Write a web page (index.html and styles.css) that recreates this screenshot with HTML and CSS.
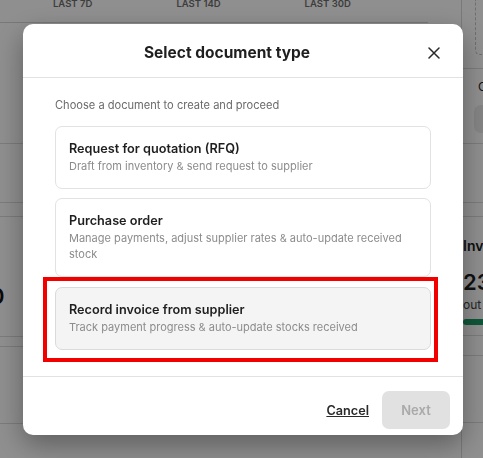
FILE: index.html
```html
<!DOCTYPE html>
<html lang="en">
<head>
  <meta charset="UTF-8">
  <title>Select document type</title>
  <link rel="stylesheet" href="styles.css">
</head>
<body>
  <div class="page">
    <div class="main">
      <div class="ranges">
        <span>Last 7D</span>
        <span>Last 14D</span>
        <span>Last 30D</span>
      </div>
      <div class="row h120"></div>
      <div class="row h58"></div>
      <div class="row h13"></div>
      <div class="row h119"><span class="big-num">0</span></div>
      <div class="row h9"></div>
      <div class="row h76"></div>
    </div>
    <aside class="side">
      <div class="side-top">
        <div class="drop-box"></div>
      </div>
      <div class="side-filter">
        <div class="side-label">C</div>
        <div class="side-select"></div>
      </div>
      <div class="row h58"></div>
      <div class="row h13"></div>
      <div class="side-stat">
        <div class="stat-title">Inventory</div>
        <div class="stat-num">23</div>
        <div class="stat-sub">out of</div>
        <div class="stat-bar"></div>
      </div>
      <div class="row h19"></div>
      <div class="row h66"></div>
    </aside>
  </div>

  <div class="backdrop">
    <div class="modal">
      <header class="modal-head">
        <h2>Select document type</h2>
        <button class="close" type="button" aria-label="Close">
          <svg width="12" height="12" viewBox="0 0 12 12">
            <path d="M1 1L11 11M11 1L1 11" stroke="#2a2a2a" stroke-width="1.5" stroke-linecap="round"/>
          </svg>
        </button>
      </header>
      <div class="modal-body">
        <p class="hint">Choose a document to create and proceed</p>
        <div class="options">
          <div class="option">
            <div class="option-title">Request for quotation (RFQ)</div>
            <div class="option-desc">Draft from inventory &amp; send request to supplier</div>
          </div>
          <div class="option">
            <div class="option-title">Purchase order</div>
            <div class="option-desc">Manage payments, adjust supplier rates &amp; auto-update received stock</div>
          </div>
          <div class="option selected">
            <div class="option-title">Record invoice from supplier</div>
            <div class="option-desc">Track payment progress &amp; auto-update stocks received</div>
          </div>
        </div>
      </div>
      <footer class="modal-foot">
        <a class="cancel" href="#">Cancel</a>
        <button class="next" type="button" disabled>Next</button>
      </footer>
    </div>
  </div>
</body>
</html>
```

FILE: styles.css
```css
html, body {
  height: 458px;
  overflow: hidden;
}
body {
  font-family: 'Inter', 'Noto Sans', sans-serif;
  margin: 0;
  padding: 0;
  background-color: #fff;
}

/* dashboard behind the dialog */
.page {
  display: flex;
  height: 458px;
}
.main {
  width: 461px;
  border-right: 1px solid #d8d8d8;
  flex-shrink: 0;
}
.ranges {
  display: flex;
  gap: 84px;
  height: 22px;
  margin-right: 33px;
  padding-left: 53px;
  border-bottom: 1px solid #d6d6d6;
}
.ranges span {
  margin-top: -2px;
  font-size: 9.5px;
  line-height: 12px;
  font-weight: 600;
  text-transform: uppercase;
  color: #6e6e6e;
}
.row {
  border-bottom: 1px solid #dcdcdc;
}
.h120 { height: 120px; }
.h58 { height: 58px; }
.h13 { height: 13px; }
.h119 { height: 119px; }
.h9 { height: 9px; }
.h76 { height: 76px; }
.h19 { height: 19px; }
.h66 { height: 66px; }
.big-num {
  display: block;
  padding: 66px 0 0;
  margin-left: -10px;
  font-size: 22px;
  font-weight: 600;
  color: #111;
}

.side {
  flex: 1;
  overflow: hidden;
  white-space: nowrap;
}
.side-top {
  height: 68px;
  padding-left: 13px;
  border-bottom: 1px solid #dcdcdc;
}
.drop-box {
  height: 54px;
  border: 1px dashed #c4c4c4;
  border-top: none;
  border-right: none;
  border-radius: 0 0 0 5px;
}
.side-filter {
  height: 74px;
  padding-left: 16px;
  border-bottom: 1px solid #dcdcdc;
}
.side-label {
  padding-top: 10px;
  font-size: 12px;
  line-height: 16px;
  color: #222;
}
.side-select {
  height: 28px;
  margin: 10px 0 0 -4px;
  background-color: #ececec;
  border-radius: 7px 0 0 7px;
}
.side-stat {
  height: 118px;
  padding-left: 1px;
  border-bottom: 1px solid #dcdcdc;
}
.stat-title {
  padding-top: 20px;
  font-size: 14px;
  line-height: 18px;
  font-weight: 600;
  color: #1c1c1c;
}
.stat-num {
  margin-top: 14px;
  font-size: 22px;
  line-height: 26px;
  font-weight: 600;
  color: #1c1c1c;
}
.stat-sub {
  margin-top: 3px;
  font-size: 12px;
  line-height: 14px;
  color: #444;
}
.stat-bar {
  height: 6px;
  margin-top: 7px;
  background-color: #1b9a66;
  border-radius: 3px 0 0 3px;
}

/* dialog */
.backdrop {
  position: fixed;
  inset: 0;
  background-color: rgba(0, 0, 0, 0.44);
}
.modal {
  width: 440px;
  margin: 24px 0 0 23px;
  background-color: #fff;
  border-radius: 10px;
  box-shadow: 0 10px 28px rgba(0, 0, 0, 0.35);
}
.modal-head {
  display: flex;
  align-items: center;
  padding: 18px 13px 13px 13px;
  border-bottom: 1px solid #e2e2e2;
}
.modal-head h2 {
  flex: 1;
  margin: 0;
  text-align: center;
  font-size: 15.5px;
  line-height: 22px;
  font-weight: 700;
  color: #1f1f1f;
}
.close {
  width: 32px;
  height: 22px;
  padding: 0;
  border: none;
  background: none;
  display: flex;
  align-items: center;
  justify-content: center;
}
.modal-body {
  padding: 19px 32px 26px;
}
.hint {
  margin: 0 0 13px;
  font-size: 11.1px;
  line-height: 16px;
  color: #6a6a6a;
}
.options {
  display: flex;
  flex-direction: column;
  gap: 9px;
}
.option {
  position: relative;
  padding: 13px 13px 14px;
  border: 1px solid #e2e2e2;
  border-radius: 7px;
}
.option.selected {
  margin-top: 1px;
  background-color: #f4f4f4;
  border-color: #dadada;
}
.option.selected::after {
  content: "";
  position: absolute;
  top: -11px;
  left: -13px;
  right: -8px;
  bottom: -13px;
  border: 4px solid #f20000;
}
.option-title {
  font-size: 12.7px;
  line-height: 18px;
  font-weight: 600;
  color: #1f1f1f;
}
.option-desc {
  font-size: 11px;
  line-height: 16px;
  color: #8c8c8c;
}
.modal-foot {
  display: flex;
  align-items: center;
  justify-content: flex-end;
  gap: 13px;
  padding: 14px 13px 6px;
  border-top: 1px solid #e2e2e2;
}
.cancel {
  font-size: 12.7px;
  font-weight: 600;
  color: #2a2a2a;
  text-decoration: underline;
}
.next {
  width: 68px;
  height: 38px;
  border: none;
  border-radius: 7px;
  background-color: #e1e1e1;
  color: #a9a9a9;
  font-family: inherit;
  font-size: 13px;
  font-weight: 600;
}
```
